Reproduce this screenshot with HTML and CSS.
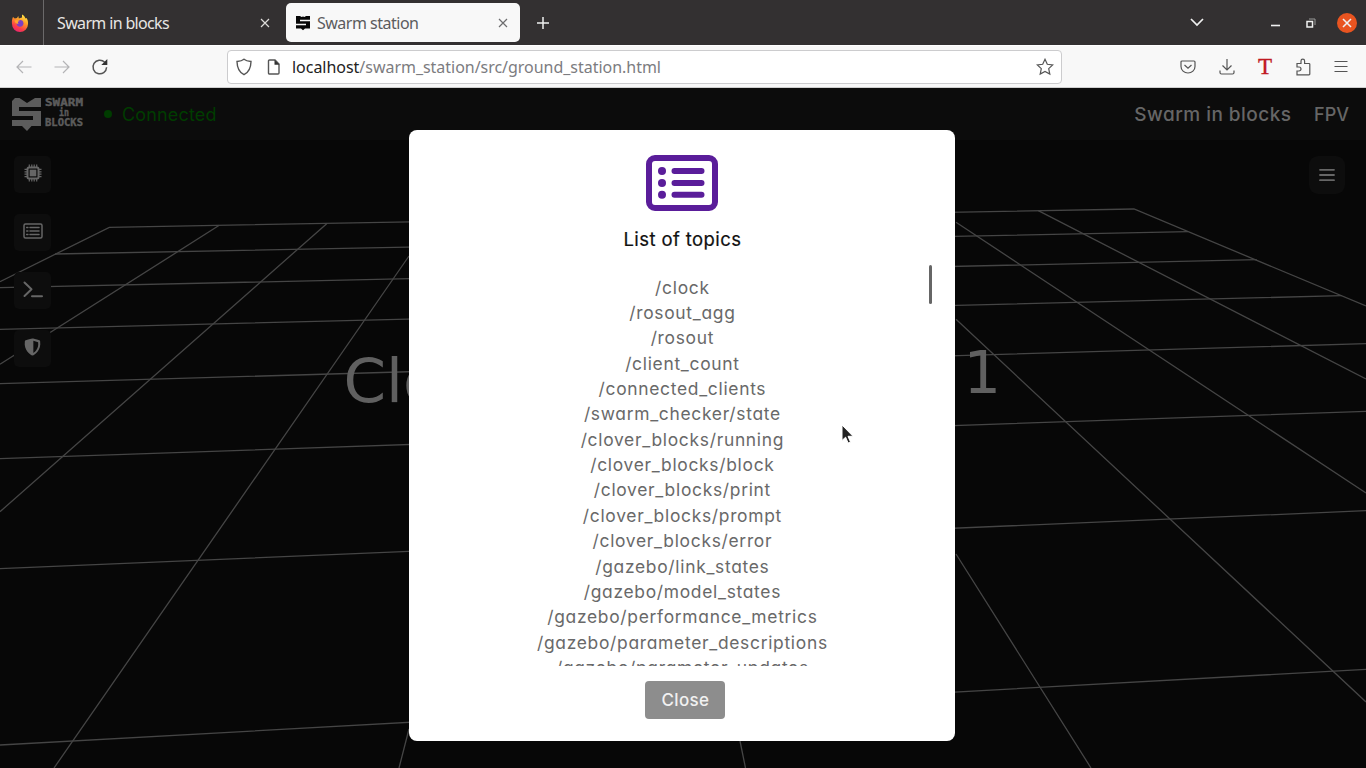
FILE: index.html
```html
<!DOCTYPE html>
<html lang="en">
<head>
<meta charset="utf-8">
<title>Swarm station</title>
<link rel="stylesheet" href="styles.css">
</head>
<body>
<div class="browser">
  <div class="tabs">
    <div class="ff">
      <svg width="20" height="20" viewBox="0 0 20 20"><defs><linearGradient id="fox" x1=".8" y1="0" x2=".3" y2="1"><stop offset="0" stop-color="#fff04a"/><stop offset=".4" stop-color="#ff9a26"/><stop offset=".75" stop-color="#fb3f47"/><stop offset="1" stop-color="#e92372"/></linearGradient></defs><path d="M3 4l1.800 1.600L7 5l1.300-2 .5 2.400L12 4.500 12 1.500c2 1 3 2.500 3.500 4l1-.5c1.200 1.800 1.700 3.600 1.500 6A8 8 0 0 1 2 11c-.3-2.800 0-5 1-7z" fill="url(#fox)"/><circle cx="10" cy="10.300" r="3.400" fill="#7c3fc4"/><path d="M4.500 7.500c2-1 4-.6 5.600.6-2.300.2-2.800 1.600-1.500 2.300-1.600.7-3.500 0-4.100-2.900z" fill="#ffa62c"/></svg>
    </div>
    <div class="tab tab-idle"><span class="tab-name">Swarm in blocks</span><svg class="x" width="10" height="10" viewBox="0 0 10 10"><path d="M1 1l8 8M9 1L1 9"/></svg></div>
    <div class="tab tab-active">
      <svg class="fav" width="16" height="16" viewBox="0 0 16 16"><path fill="#080808" d="M1 1h4l1.500 1L8 1.500l1.500.5L11 1h4v3.800H5v1.500h10V13.500h-5l-2 1.800-2-1.800H1v-3.200h10V8.800H1z"/></svg>
      <span class="tab-name">Swarm station</span><svg class="x" width="10" height="10" viewBox="0 0 10 10"><path d="M1 1l8 8M9 1L1 9"/></svg>
    </div>
    <svg class="plus" width="14" height="14" viewBox="0 0 14 14"><path d="M7 1v12M1 7h12"/></svg>
    <div class="win">
      <svg class="w-chev" width="14" height="9" viewBox="0 0 14 9"><path d="M1 1l6 6 6-6"/></svg>
      <svg class="w-min" width="9" height="12" viewBox="0 0 9 12"><path d="M0 8.500h9"/></svg>
      <svg class="w-max" width="10" height="10" viewBox="0 0 10 10"><path d="M1 3.500h5.500V9H1z"/><path class="back" d="M3 1h6v6"/></svg>
      <span class="w-close"><svg width="10" height="10" viewBox="0 0 10 10"><path d="M1 1l8 8M9 1L1 9"/></svg></span>
    </div>
  </div>

  <div class="toolbar">
    <svg class="t-back" width="16" height="14" viewBox="0 0 16 14"><path d="M15.500 7H1.500M7 1L1 7l6 6"/></svg>
    <svg class="t-fwd" width="16" height="14" viewBox="0 0 16 14"><path d="M.5 7h14M9 1l6 6-6 6"/></svg>
    <svg class="t-load" width="18" height="18" viewBox="0 0 18 18"><path d="M15.600 9.300A6.800 6.800 0 1 1 13.700 4.300"/><path class="solid" d="M16.300 1v6h-6z"/></svg>
    <div class="address">
      <svg class="a-shield" width="18" height="18" viewBox="0 0 18 18"><path d="M9 1.300c1.500 1.300 3.700 2 7 2.200-.1 5-1.200 10.400-7 13.200C3.200 13.900 2.100 8.500 2 3.500c3.300-.2 5.500-.9 7-2.200z"/></svg>
      <svg class="a-page" width="14" height="16" viewBox="0 0 14 16"><path d="M2.500 1H8l4 4v9a1 1 0 0 1-1 1H2.500a1 1 0 0 1-1-1V2a1 1 0 0 1 1-1z"/><path class="solid" d="M7.500 1v4.800H12.500z"/></svg>
      <span class="url"><b>localhost</b>/swarm_station/src/ground_station.html</span>
      <svg class="a-star" width="18" height="18" viewBox="0 0 18 18"><path d="M9 1.300l2.300 5 5.400.6-4 3.700 1.100 5.500L9 13.400l-4.800 2.700 1.100-5.500-4-3.700 5.400-.6z"/></svg>
    </div>
    <div class="tools">
      <svg width="16" height="16" viewBox="0 0 16 16"><path d="M2 2h12a1 1 0 0 1 1 1v4.500a7 6.500 0 0 1-14 0V3a1 1 0 0 1 1-1z"/><path d="M4.500 6L8 9.300 11.500 6"/></svg>
      <svg width="16" height="16" viewBox="0 0 16 16"><path d="M8 0v10.500M3.500 6.500L8 11l4.500-4.500M1 11.500v2A1.500 1.500 0 0 0 2.500 15h11a1.500 1.500 0 0 0 1.500-1.500v-2"/></svg>
      <span class="t-glyph">T</span>
      <svg width="16" height="18" viewBox="0 0 16 18"><path d="M2 8V5.500h4V3a1.800 1.800 0 0 1 3.600 0v2.500H14a.8.800 0 0 1 .8.800V16a.8.800 0 0 1-.8.800H2V13h2a1.800 1.800 0 0 0 0-4H2z"/></svg>
      <svg width="14" height="14" viewBox="0 0 14 14"><path d="M.5 1.500h13M.5 6.500h13M.5 11.500h13"/></svg>
    </div>
  </div>

  <div class="page">
    <svg class="scene" width="1366" height="680" viewBox="0 88 1366 680">
      <g class="grid">
        <path d="M0 281.700L109.300 227.300 1134 209 1366 306"/>
        <path d="M55 254L1188 231.700M0 287.700L1256.700 259.700M0 329.300L1341.700 295.700M0 383.700L1366 343.700M0 458.700L1366 411.300M0 568.700L1366 510.700M0 745L1366 669.300"/>
        <path d="M219.300 225.300L0 364.300M326.700 223.700L0 511.700M409 256L54 768M409 729L399 768M740 741L745.500 768M956 554L1091 768M956 319.300L1366 702M956 222.300L1366 493M1038.300 210.700L1366 379"/>
      </g>
      <text class="label" x="343.500" y="401.500" font-size="61">Clo</text>
      <text class="label" x="963.500" y="392.700" font-size="59">1</text>
    </svg>

    <div class="header">
      <svg class="logo" width="74" height="36" viewBox="0 0 74 36"><path fill="#5c5c5c" d="M3 2h4.500l7.500 5 8-5H29v9H7v4h22V30h-9.500l-4.500 5-5-5H0v-6h21v-4H0V5z"/><g class="logo-text"><text x="33" y="10" textLength="38" lengthAdjust="spacingAndGlyphs">SWARM</text><text x="47" y="20" textLength="10" lengthAdjust="spacingAndGlyphs">in</text><text x="33" y="30" textLength="38" lengthAdjust="spacingAndGlyphs">BLOCKS</text></g></svg>
      <span class="dot"></span><span class="connected">Connected</span>
      <nav class="nav"><span class="nav-swarm">Swarm in blocks</span><span class="nav-fpv">FPV</span></nav>
    </div>

    <div class="body">
      <div class="side">
        <div class="tile"><svg width="18" height="18" viewBox="0 0 18 18" class="chip"><path d="M5.300 .5v17M7.800 .5v17M10.200 .5v17M12.700 .5v17M.5 5.300h17M.5 7.800h17M.5 10.200h17M.5 12.700h17"/><rect class="case" x="3.500" y="3.500" width="11" height="11" rx="1.500"/><rect class="core" x="5.700" y="5.700" width="6.600" height="6.600"/></svg></div>
        <div class="tile"><svg width="20" height="16" viewBox="0 0 20 16" class="line"><rect x="1" y="1" width="18" height="14" rx="1.500"/><path d="M7 4.500h9M7 8h9M7 11.500h9M3.700 4.500h1.200M3.700 8h1.200M3.700 11.500h1.200"/></svg></div>
        <div class="tile"><svg width="20" height="17" viewBox="0 0 20 17" class="line thick"><path d="M1.500 1.500L8.500 8.300l-7 6.700M9 15.200h10"/></svg></div>
        <div class="tile"><svg width="17" height="18" viewBox="0 0 16 16"><path fill-rule="evenodd" d="M8 0c.7 0 2 .4 3.300.8 1.200.3 2.400.7 3 .9.500.1.900.5.900 1 .6 4.300-.7 7.500-2.300 9.600C11.300 14.400 9 16 8 16s-3.300-1.600-4.900-3.700C1.500 10.200.2 7 .8 2.700c0-.5.400-.9.900-1C3.300 1.200 6.500 0 8 0zm.8 13.600c.6-.4 1.700-1.200 2.700-2.500 1.500-1.900 2.200-4.200 1.800-7.500C11.800 3 10.200 2.400 8.800 2.100z"/></svg></div>
      </div>
      <div class="tile menu"><svg width="16" height="14" viewBox="0 0 16 14" class="line"><path d="M1 1.800h14M1 7h14M1 12.200h14"/></svg></div>
    </div>

    <div class="modal">
      <svg class="m-icon" width="72" height="56" viewBox="0 0 72 56"><rect x="3" y="3" width="66" height="50" rx="6"/><path d="M28.500 16h27M28.500 28h27M28.500 39.800h27"/><g><circle cx="16" cy="16" r="4"/><circle cx="16" cy="28" r="4"/><circle cx="16" cy="39.800" r="4"/></g></svg>
      <h1 class="m-title">List of topics</h1>
      <div class="m-scroll">
        <ul class="topics">
          <li>/clock</li><li>/rosout_agg</li><li>/rosout</li><li>/client_count</li><li>/connected_clients</li><li>/swarm_checker/state</li><li>/clover_blocks/running</li><li>/clover_blocks/block</li><li>/clover_blocks/print</li><li>/clover_blocks/prompt</li><li>/clover_blocks/error</li><li>/gazebo/link_states</li><li>/gazebo/model_states</li><li>/gazebo/performance_metrics</li><li>/gazebo/parameter_descriptions</li><li>/gazebo/parameter_updates</li>
        </ul>
        <span class="thumb"></span>
      </div>
      <button class="m-close">Close</button>
    </div>
    <svg class="cursor" width="14" height="22" viewBox="0 0 14 22"><path d="M1 1v15.500l3.600-3.300 2.500 5.800 2.400-1-2.500-5.700h5z"/></svg>
  </div>
</div>
</body>
</html>
```
FILE: styles.css
```css
* { box-sizing: border-box; }
body { margin: 0; overflow: hidden; font-family: Inter, "Open Sans", sans-serif; font-feature-settings: "cv11"; }
svg { display: block; flex: none; fill: none; }
.browser { width: 1366px; height: 768px; display: flex; flex-direction: column; }

.tabs { height: 45px; flex: none; background: #333031; display: flex; align-items: center; font: 16px "Noto Sans", sans-serif; }
.ff { width: 44px; height: 45px; border-right: 1px solid #6b696a; display: flex; align-items: center; padding-left: 10px; }
.tab { display: flex; align-items: center; white-space: nowrap; }
.tab-idle { width: 242px; padding: 0 16px 0 13px; justify-content: space-between; color: #e8e6e4; }
.tab-active { width: 234px; height: 39px; border-radius: 5px; background: #f8f8f8; color: #5c5c5e; padding: 0 12px 0 9px; }
.tab-active .fav { margin-right: 6px; }
.tab-active .x { margin-left: auto; }
.tab-name { letter-spacing: -.65px; }
.tab-active .tab-name { letter-spacing: -.5px; }
.x { stroke: #dedcda; stroke-width: 1.2; }
.tab-active .x { stroke: #6d6d6f; }
.plus { stroke: #eee; stroke-width: 1.5; margin-left: 16px; }
.win { margin-left: auto; display: flex; align-items: center; stroke: #f0f0f0; padding-right: 9px; }
.w-chev { stroke-width: 1.7; margin-right: 67px; }
.w-min { stroke-width: 1.6; margin-right: 26px; }
.w-max { stroke-width: 1.5; margin-right: 21px; }
.w-max .back { stroke: #999; stroke-width: 1; }
.w-close { width: 20px; height: 20px; border-radius: 50%; background: #e95420; display: flex; align-items: center; justify-content: center; stroke-width: 1.6; }

.toolbar { height: 43px; flex: none; background: #f8f8f8; display: flex; align-items: center; border-bottom: 1px solid #cfcfcf; border-top: 1px solid #fff; padding-left: 16px; stroke: #555; stroke-width: 1.2; }
.t-back { stroke: #b4b4b6; margin-right: 22px; }
.t-fwd { stroke: #b4b4b6; margin-right: 21px; }
.t-load { stroke-width: 1.5; }
.solid { fill: #333; stroke: none; }
.address { margin-left: 118px; width: 835px; height: 34px; background: #fff; border: 1px solid #ccccce; border-radius: 4px; display: flex; align-items: center; padding: 0 7px; }
.a-shield { stroke-width: 1.4; }
.a-page { margin-left: 14px; stroke-width: 1.4; }
.a-star { margin-left: auto; }
.url { font: 16px "Noto Sans", sans-serif; letter-spacing: -.03px; color: #7c7c7f; margin-left: 11px; white-space: nowrap; }
.url b { font-weight: 400; color: #222; }
.tools { flex: 1; display: flex; align-items: center; justify-content: space-between; padding: 0 18px 0 118px; }
.t-glyph { font: 23px/26px "Liberation Serif", serif; color: #c01a22; width: 14px; -webkit-text-stroke: .4px #c01a22; }

.page { position: relative; flex: 1; background: #070707; display: flex; flex-direction: column; align-items: stretch; overflow: hidden; }
.scene { position: absolute; left: 0; top: 0; }
.grid { stroke: #454545; stroke-width: 1.3; }
.label { font-family: "DejaVu Sans", sans-serif; fill: #606060; }
.header { position: relative; height: 52px; flex: none; background: #0c0c0c; display: flex; align-items: center; padding: 0 17px 0 12px; font-size: 18px; }
.logo-text { font: bold 10.500px "DejaVu Sans Mono", monospace; fill: #5c5c5c; stroke: #5c5c5c; stroke-width: .4; }
.dot { width: 8px; height: 8px; border-radius: 50%; background: #003c00; margin: 0 0 0 18px; }
.connected { color: #003c00; margin-left: 10px; letter-spacing: .15px; }
.nav { margin-left: auto; display: flex; gap: 22.500px; color: #666; font-weight: 500; white-space: nowrap; }
.nav-swarm { font-size: 19px; letter-spacing: .48px; }
.nav-fpv { font-size: 18px; line-height: 23px; }
.body { position: relative; display: flex; justify-content: space-between; padding: 16px 21px 0 14px; }
.side { display: flex; flex-direction: column; gap: 21px; }
.tile { width: 37px; height: 37px; border-radius: 5px; background: #0d0d0d; display: flex; align-items: center; justify-content: center; padding-bottom: 3px; }
.tile svg { fill: #666; }
.tile .line { fill: none; stroke: #666; stroke-width: 1.5; stroke-linecap: round; }
.tile .thick { stroke-width: 2; stroke-linejoin: round; }
.tile .chip { stroke: #666; stroke-width: 1.2; }
.chip .case { fill: #0d0d0d; stroke-width: 2; }
.chip .core { stroke: none; }
.menu { width: 36px; height: 38px; border-radius: 9px; padding: 0; }
.menu .line { stroke-width: 1.8; }

.modal { position: absolute; left: 409.400px; top: 42px; width: 546px; height: 611px; background: #fff; border-radius: 8px; display: flex; flex-direction: column; align-items: center; padding-top: 25px; }
.m-icon { stroke: #5a1d9a; stroke-width: 6; stroke-linecap: round; }
.m-icon g { fill: #5a1d9a; stroke: none; }
.m-title { margin: 14px 0 0; font-size: 18.500px; line-height: 28px; font-weight: 400; letter-spacing: .4px; color: #111; -webkit-text-stroke: .2px; white-space: nowrap; }
.m-scroll { width: 500px; height: 401px; margin-top: 12px; overflow: hidden; display: flex; justify-content: flex-end; position: relative; }
.topics { list-style: none; margin: 0; padding: 9.600px 0 0; flex: 1; text-align: center; font-size: 17.400px; line-height: 25.360px; letter-spacing: .71px; color: #696969; }
.thumb { position: absolute; right: 0; top: 0; width: 3px; height: 39px; background: #666; border-radius: 2px; }
.m-close { margin: 15px 0 0 6px; width: 80px; height: 38px; flex: none; border: 0; border-radius: 4px; background: #8d8d8d; color: #f1f1f1; font: 500 17px Inter, sans-serif; letter-spacing: .3px; padding: 0; }
.cursor { position: absolute; left: 841px; top: 336px; fill: #222; stroke: #fff; stroke-width: 1; }
```
